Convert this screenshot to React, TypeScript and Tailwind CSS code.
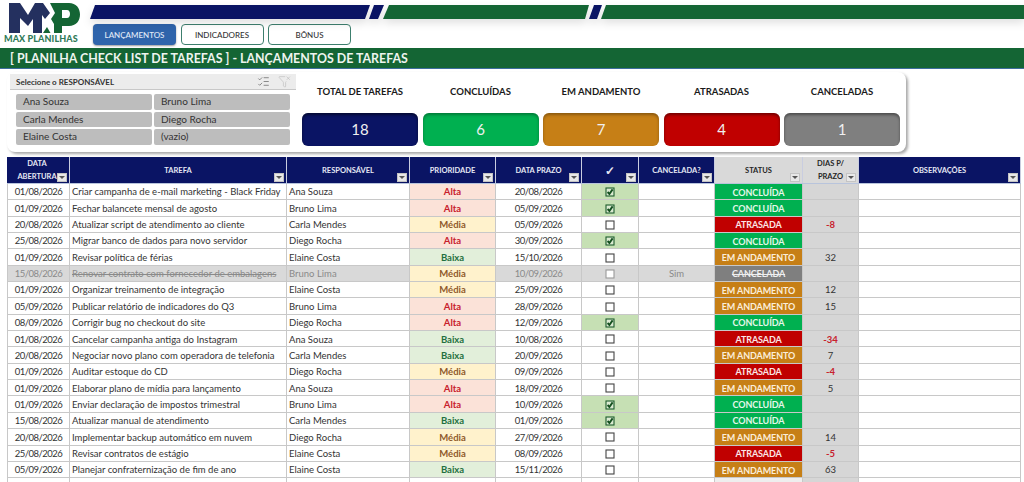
import { ListChecks, FunnelX } from "lucide-react";

type Row = [string, string, string, string, string, boolean, string, string, string];
const rows: Row[] = [
  ["01/08/2026", "Criar campanha de e-mail marketing - Black Friday", "Ana Souza", "Alta", "20/08/2026", true, "", "CONCLUÍDA", ""],
  ["01/09/2026", "Fechar balancete mensal de agosto", "Bruno Lima", "Alta", "05/09/2026", true, "", "CONCLUÍDA", ""],
  ["20/08/2026", "Atualizar script de atendimento ao cliente", "Carla Mendes", "Média", "05/09/2026", false, "", "ATRASADA", "-8"],
  ["25/08/2026", "Migrar banco de dados para novo servidor", "Diego Rocha", "Alta", "30/09/2026", true, "", "CONCLUÍDA", ""],
  ["01/09/2026", "Revisar política de férias", "Elaine Costa", "Baixa", "15/10/2026", false, "", "EM ANDAMENTO", "32"],
  ["15/08/2026", "Renovar contrato com fornecedor de embalagens", "Bruno Lima", "Média", "10/09/2026", false, "Sim", "CANCELADA", ""],
  ["01/09/2026", "Organizar treinamento de integração", "Elaine Costa", "Média", "25/09/2026", false, "", "EM ANDAMENTO", "12"],
  ["05/09/2026", "Publicar relatório de indicadores do Q3", "Bruno Lima", "Alta", "28/09/2026", false, "", "EM ANDAMENTO", "15"],
  ["08/09/2026", "Corrigir bug no checkout do site", "Diego Rocha", "Alta", "12/09/2026", true, "", "CONCLUÍDA", ""],
  ["01/08/2026", "Cancelar campanha antiga do Instagram", "Ana Souza", "Baixa", "10/08/2026", false, "", "ATRASADA", "-34"],
  ["20/08/2026", "Negociar novo plano com operadora de telefonia", "Carla Mendes", "Baixa", "20/09/2026", false, "", "EM ANDAMENTO", "7"],
  ["01/09/2026", "Auditar estoque do CD", "Diego Rocha", "Média", "09/09/2026", false, "", "ATRASADA", "-4"],
  ["01/09/2026", "Elaborar plano de mídia para lançamento", "Ana Souza", "Alta", "18/09/2026", false, "", "EM ANDAMENTO", "5"],
  ["01/09/2026", "Enviar declaração de impostos trimestral", "Bruno Lima", "Alta", "10/09/2026", true, "", "CONCLUÍDA", ""],
  ["15/08/2026", "Atualizar manual de atendimento", "Carla Mendes", "Baixa", "01/09/2026", true, "", "CONCLUÍDA", ""],
  ["20/08/2026", "Implementar backup automático em nuvem", "Diego Rocha", "Média", "27/09/2026", false, "", "EM ANDAMENTO", "14"],
  ["25/08/2026", "Revisar contratos de estágio", "Elaine Costa", "Média", "08/09/2026", false, "", "ATRASADA", "-5"],
  ["05/09/2026", "Planejar confraternização de fim de ano", "Elaine Costa", "Baixa", "15/11/2026", false, "", "EM ANDAMENTO", "63"],
];

const cols = "grid grid-cols-[63px_217px_123px_86px_86px_57px_76px_88px_56px_162px]";
const prio: Record<string, string> = {
  Alta: "bg-[#fbe2d8] text-[#c8202c]",
  "Média": "bg-[#fff2cc] text-[#8f5a2a]",
  Baixa: "bg-[#e2efda] text-[#1f7040]",
};
const statusCls: Record<string, string> = {
  "CONCLUÍDA": "bg-[#00b050] text-[#e4f7ea]",
  ATRASADA: "bg-[#c00000] text-[#fbe6e6]",
  "EM ANDAMENTO": "bg-[#c67f16] text-[#fbeeda]",
  CANCELADA: "bg-[#7f7f7f] text-[#eeeeee] line-through",
};
const line = "border-r border-b border-[#c8c8c8]";
const date = "tracking-[-0.5px]";

function Filter() {
  return (
    <span className="absolute right-[2px] bottom-[1px] flex h-[9px] w-[10px] items-center justify-center bg-[#e8e8e8] border border-[#c4c4c4]">
      <span className="h-0 w-0 border-x-[3px] border-t-[3px] border-x-transparent border-t-[#555]" />
    </span>
  );
}

function Head({ label, gray }: { label: React.ReactNode; gray?: boolean }) {
  return (
    <div
      className={`relative flex items-center justify-center border-r border-[#c9cde0] text-center text-[7.5px] font-bold leading-[13px] ${
        gray ? "bg-[#d9d9d9] text-[#262626]" : "bg-[#0a1464] text-[#e6e8f4]"
      }`}
    >
      {label}
      <Filter />
    </div>
  );
}

function Box({ checked, faded }: { checked: boolean; faded: boolean }) {
  return (
    <svg width="10" height="10" viewBox="0 0 10 10" className="block">
      <rect x="1" y="1" width="8" height="8" fill={checked ? "#dcebd2" : "#fff"} stroke={faded ? "#9a9a9a" : checked ? "#1d5c2c" : "#444"} strokeWidth="1.1" />
      {checked && <path d="M2.6 5 L4.4 7 L7.6 2.4" fill="none" stroke="#14501f" strokeWidth="1.9" />}
    </svg>
  );
}

function Logo() {
  return (
    <div className="flex w-[90px] flex-col pl-[4px] pt-[2px]">
      <svg width="78" height="32" viewBox="4 2 78 32" className="block">
        <path d="M9 3 H20 L28 15 L35 3 H43 L50 13 L45 19 L42 15 V33 H33 V19 L28 26 L20 18 V33 H9 Z" fill="#24305f" />
        <path d="M43 33 L47 27 L50.5 33 Z" fill="#146534" />
        <path fillRule="evenodd" d="M50 3 H69 C76 3 80 8 80 14.5 C80 21 76 26 69 26 H62 V33 H54 V24 L51 19 L55 13 Z M62 10 H67 C69 10 70 12 70 14 C70 16 69 18 67 18 H62 Z" fill="#146534" />
      </svg>
      <div className="whitespace-nowrap text-[9px] font-black leading-[10px] tracking-[0.1px] text-[#2f7a58]">MAX PLANILHAS</div>
    </div>
  );
}

function Stripes() {
  return (
    <svg width="934" height="15" viewBox="0 0 934 15" className="block [filter:drop-shadow(0_4px_4px_rgba(0,0,0,0.12))]">
      <polygon points="5,0 280,0 275,14 0,14" fill="#0a1464" />
      <polygon points="284,0 294,0 288,14 279,14" fill="#0a1464" />
      <polygon points="299,0 499,0 495,14 293,14" fill="#146534" />
      <polygon points="504,0 512,0 507,14 499,14" fill="#0a1464" />
      <polygon points="516,0 934,0 934,14 511,14" fill="#146534" />
    </svg>
  );
}

function Nav({ label, active }: { label: string; active?: boolean }) {
  return (
    <div
      className={`flex h-[21px] w-[83px] items-center justify-center rounded-[4px] text-[8px] font-medium ${
        active ? "bg-[#2f64ab] text-[#e3ecf8] shadow-[0_1px_2px_rgba(0,0,0,0.4)]" : "border border-[#3d7f6e] bg-white text-[#333]"
      }`}
    >
      {label}
    </div>
  );
}

function Kpi({ label, value, cls }: { label: string; value: string; cls: string }) {
  return (
    <div className="flex w-[116px] flex-col items-center">
      <div className="flex h-[39px] items-center pb-[3px] text-[9.5px] font-bold text-[#1a1a1a]">{label}</div>
      <div className={`flex h-[33px] w-full items-center justify-center rounded-[6px] text-[15px] text-[#f0f0f0] ${cls}`}>{value}</div>
    </div>
  );
}

export default function App() {
  return (
    <div className="flex h-[482px] w-[1024px] flex-col overflow-hidden bg-white font-['Lato','Liberation_Sans',sans-serif]">
      <div className="flex h-[48px] shrink-0">
        <Logo />
        <div className="flex flex-col pt-[5px]">
          <Stripes />
          <div className="mt-[4px] flex gap-[4.5px] pl-[3px]">
            <Nav label="LANÇAMENTOS" active />
            <Nav label="INDICADORES" />
            <Nav label="BÔNUS" />
          </div>
        </div>
      </div>

      <div className="flex h-[21px] shrink-0 items-center border-b border-[#3c6e9c] bg-[#146534] pl-[10px] pt-[2px] text-[12.4px] font-bold text-[#eef4ef]">
        [ PLANILHA CHECK LIST DE TAREFAS ] - LANÇAMENTOS DE TAREFAS
      </div>

      <div className="h-[88px] shrink-0 pl-[7px] pt-[3px]">
        <div className="flex h-[80px] w-[899px] rounded-[8px] bg-white pl-[3px] pt-[2px] shadow-[2px_2px_3px_rgba(0,0,0,0.35)]">
          <div className="w-[286px]">
            <div className="flex h-[16px] items-center justify-between border-b border-[#c8c8c8] bg-[#ececec] pl-[6px] pr-[5px] text-[8px] font-bold text-[#333]">
              <span>Selecione o RESPONSÁVEL</span>
              <span className="flex items-center gap-[8px]">
                <ListChecks size={13} strokeWidth={1.2} className="text-[#555]" />
                <FunnelX size={13} strokeWidth={1} className="text-[#b5b5b5]" />
              </span>
            </div>
            <div className="mt-[4px] grid grid-cols-[136px_136px] gap-x-[2px] gap-y-[2px] pl-[6px]">
              {["Ana Souza", "Bruno Lima", "Carla Mendes", "Diego Rocha", "Elaine Costa", "(vazio)"].map((n) => (
                <div key={n} className="flex h-[15.5px] items-center rounded-[2px] bg-[#bdbdbd] pl-[7px] text-[10px] text-[#333]">
                  {n}
                </div>
              ))}
            </div>
          </div>
          <div className="ml-[6px] flex gap-[4.5px]">
            <Kpi label="TOTAL DE TAREFAS" value="18" cls="bg-[#0a1464] shadow-[inset_0_2px_3px_rgba(0,0,0,0.5)]" />
            <Kpi label="CONCLUÍDAS" value="6" cls="bg-[#00b050] shadow-[inset_0_2px_3px_rgba(0,0,0,0.3)]" />
            <Kpi label="EM ANDAMENTO" value="7" cls="bg-[#c67f16] shadow-[inset_0_2px_3px_rgba(0,0,0,0.3)]" />
            <Kpi label="ATRASADAS" value="4" cls="bg-[#c00000] shadow-[inset_0_2px_3px_rgba(0,0,0,0.4)]" />
            <Kpi label="CANCELADAS" value="1" cls="bg-[#7f7f7f] shadow-[inset_0_2px_3px_rgba(0,0,0,0.4)]" />
          </div>
        </div>
      </div>

      <div className="ml-[7px] w-[1014px] shrink-0">
        <div className={`${cols} h-[27px] border-b-2 border-[#b8c4dc]`}>
          <Head label={<span className="pr-[2px]">DATA<br />ABERTURA</span>} />
          <Head label="TAREFA" />
          <Head label="RESPONSÁVEL" />
          <Head label="PRIORIDADE" />
          <Head label="DATA PRAZO" />
          <Head label={<span className="text-[12px]">✓</span>} />
          <Head label="CANCELADA?" />
          <Head label="STATUS" gray />
          <Head label={<span>DIAS P/<br />PRAZO</span>} gray />
          <Head label="OBSERVAÇÕES" />
        </div>
        {rows.map((r, i) => {
          const canc = r[7] === "CANCELADA";
          const bg = canc ? "bg-[#d9d9d9]" : "bg-white";
          const fg = canc ? "text-[#8a8a8a]" : "text-[#333]";
          return (
            <div key={i} className={`${cols} h-[16.35px] text-[9.5px] leading-none [&>div]:pt-[1px]`}>
              <div className={`${line} ${bg} ${fg} ${date} flex items-center justify-center border-l`}>{r[0]}</div>
              <div className={`${line} ${bg} ${fg} flex items-center whitespace-nowrap pl-[2px] ${canc ? "line-through" : ""}`}>{r[1]}</div>
              <div className={`${line} ${bg} ${fg} flex items-center pl-[2px]`}>{r[2]}</div>
              <div className={`${line} ${prio[r[3]]} flex items-center justify-center font-bold`}>{r[3]}</div>
              <div className={`${line} ${bg} ${fg} ${date} flex items-center justify-center`}>{r[4]}</div>
              <div className={`${line} ${r[5] ? "bg-[#c6e0b4]" : bg} flex items-center justify-center`}>
                <Box checked={r[5]} faded={canc} />
              </div>
              <div className={`${line} ${bg} ${fg} flex items-center justify-center`}>{r[6]}</div>
              <div className={`${line} ${statusCls[r[7]]} flex items-center justify-center text-[9px] font-bold tracking-[-0.1px]`}>{r[7]}</div>
              <div className={`${line} bg-[#d6d6d6] flex items-center justify-center ${r[8].startsWith("-") ? "font-bold text-[#c8202c]" : "text-[#333]"}`}>{r[8]}</div>
              <div className={`${line} bg-white`} />
            </div>
          );
        })}
        <div className={`${cols} h-[16.35px]`}>
          <div className={`${line} border-l`} />
          <div className={line} />
          <div className={line} />
          <div className={line} />
          <div className={line} />
          <div className={line} />
          <div className={line} />
          <div className={`${line} bg-[#eeeeee]`} />
          <div className={`${line} bg-[#d6d6d6]`} />
          <div className={line} />
        </div>
      </div>
    </div>
  );
}
